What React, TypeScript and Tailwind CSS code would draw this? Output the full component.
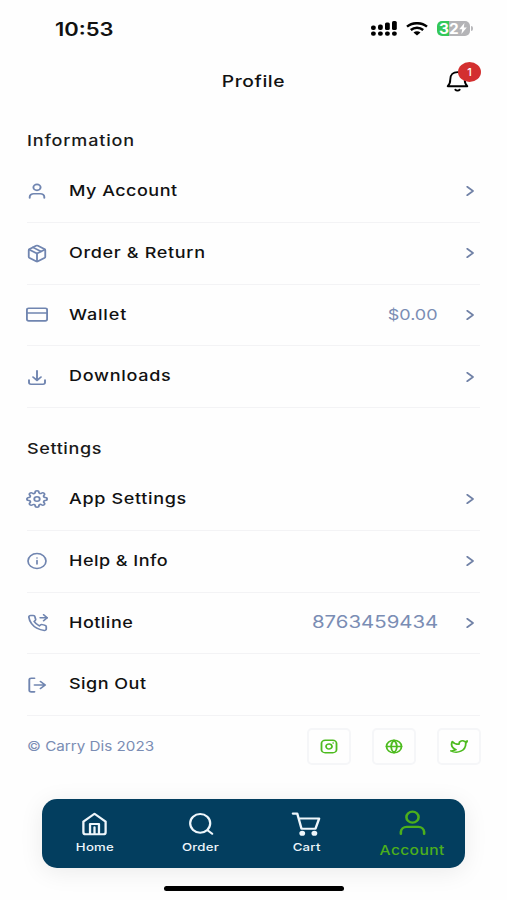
import type { ReactNode } from "react";
import { FiCreditCard, FiGlobe, FiInstagram, FiPackage, FiPhoneForwarded, FiSettings, FiTwitter } from "react-icons/fi";
import clsx from "clsx";

type RowItem = {
  label: string;
  icon: ReactNode;
  labelClass?: string;
  value?: string;
  valueClass?: string;
  arrow?: boolean;
};

const iconProps = {
  viewBox: "0 0 24 24",
  fill: "none",
  stroke: "currentColor",
  strokeLinecap: "round" as const,
  strokeLinejoin: "round" as const,
  preserveAspectRatio: "none",
};

const fiProps = { preserveAspectRatio: "none", strokeWidth: 2 };

function Icon({ children, className = "h-5 w-6", strokeWidth = 1.9 }: { children: ReactNode; className?: string; strokeWidth?: number }) {
  return (
    <svg {...iconProps} strokeWidth={strokeWidth} className={className}>
      {children}
    </svg>
  );
}

const information: RowItem[] = [
  {
    label: "My Account",
    labelClass: "tracking-[0.4px]",
    arrow: true,
    icon: (
      <Icon>
        <circle cx="12" cy="7.6" r="3.6" />
        <path d="M4.7 20.4v-1.2a4 4 0 0 1 4-4h6.6a4 4 0 0 1 4 4v1.2" />
      </Icon>
    ),
  },
  { label: "Order & Return", labelClass: "tracking-[0.55px]", arrow: true, icon: <FiPackage {...fiProps} className="h-[19px] w-[22px]" /> },
  {
    label: "Wallet",
    labelClass: "tracking-[0.7px]",
    value: "$0.00",
    valueClass: "text-[15px]",
    arrow: true,
    icon: <FiCreditCard {...fiProps} className="h-[19px] w-[22px]" />,
  },
  {
    label: "Downloads",
    labelClass: "tracking-[0.6px]",
    arrow: true,
    icon: (
      <Icon>
        <path d="M4 15.500v3.200a2 2 0 0 0 2 2h12a2 2 0 0 0 2-2v-3.200" />
        <path d="M12 4.500v11.500M8 12l4 4 4-4" />
      </Icon>
    ),
  },
];

const settings: RowItem[] = [
  { label: "App Settings", labelClass: "tracking-[0.55px]", arrow: true, icon: <FiSettings {...fiProps} className="h-[18px] w-[22px]" /> },
  {
    label: "Help & Info",
    labelClass: "tracking-[0.4px]",
    arrow: true,
    icon: (
      <Icon strokeWidth={1.7}>
        <circle cx="12" cy="12" r="9" />
        <path d="M12 11.3v4.2M12 8.3v.2" />
      </Icon>
    ),
  },
  {
    label: "Hotline",
    labelClass: "tracking-[0.4px]",
    value: "8763459434",
    valueClass: "text-[17px]",
    arrow: true,
    icon: <FiPhoneForwarded {...fiProps} className="h-[18px] w-[21px]" />,
  },
  {
    label: "Sign Out",
    labelClass: "tracking-[0.4px]",
    icon: (
      <Icon>
        <path d="M9.500 3.800H6.300a2 2 0 0 0-2 2v12.400a2 2 0 0 0 2 2h3.200" />
        <path d="M9.500 12h10.500M15.500 7.800l4.700 4.200-4.700 4.200" />
      </Icon>
    ),
  },
];

const socials = [FiInstagram, FiGlobe, FiTwitter];

function Row({ item }: { item: RowItem }) {
  return (
    <li className="flex h-[61.75px] items-center border-b border-[#f3f3f5]">
      <span className="-ml-0.5 flex w-6 justify-center text-[#7085b0]">{item.icon}</span>
      <span className={clsx("ml-5 origin-left scale-x-[1.2] text-[15px] font-medium text-[#111]", item.labelClass)}>
        {item.label}
      </span>
      {item.value && (
        <span className={clsx("mr-[28px] ml-auto origin-right scale-x-[1.2] text-[#7a8db4]", item.valueClass)}>{item.value}</span>
      )}
      {item.arrow && (
        <svg
          viewBox="0 0 8 10"
          className={clsx("mr-[6px] h-[10px] w-[8px] text-[#7081a6]", !item.value && "ml-auto")}
          fill="none"
          stroke="currentColor"
          strokeWidth="1.7"
        >
          <path d="M1.200 .8 7 5 1.200 9.200" strokeLinecap="round" strokeLinejoin="round" />
        </svg>
      )}
    </li>
  );
}

function StatusBar() {
  return (
    <div className="flex h-[57px] items-center pr-[34px] pl-[55px]">
      <span className="origin-left scale-x-[1.22] pt-px text-[18px] font-semibold text-[#111]">10:53</span>
      <svg viewBox="0 0 26 16" className="mr-[9px] ml-auto h-4 w-[26px]" fill="black">
        <rect x="0" y="4.500" width="4.800" height="4.600" rx="2" />
        <rect x="7" y="3.500" width="4.800" height="5.600" rx="2" />
        <rect x="14" y="1.500" width="4.800" height="7.600" rx="1.600" />
        <rect x="21" y="0" width="4.800" height="9.100" rx="1.600" />
        <rect x="0" y="10.500" width="4.800" height="4.200" rx="2" />
        <rect x="7" y="10.500" width="4.800" height="4.200" rx="2" />
        <rect x="14" y="10.500" width="4.800" height="4.200" rx="2" />
        <rect x="21" y="10.500" width="4.800" height="4.200" rx="2" />
      </svg>
      <svg viewBox="0 0 22 14" className="mr-[9px] h-[14px] w-[22px]" fill="none" stroke="black" strokeWidth="2.500">
        <path d="M1 4.600C6.600.1 15.400.1 21 4.600" />
        <path d="M4.800 8C8.400 5 13.600 5 17.200 8" />
        <path d="M7.500 10.500c2-1.700 5-1.700 7 0L11 13.600z" fill="black" stroke="none" />
      </svg>
      <div className="flex items-center">
        <div className="flex h-[15px] w-[33px] items-center justify-center rounded-[5px] bg-linear-to-r from-[#34c759] from-[36%] to-[#b4b4b7] to-[36%] text-white">
          <span className="mr-px scale-x-[1.1] text-[14px] leading-none font-bold">32</span>
          <svg viewBox="0 0 8 11" className="ml-[1px] h-[11px] w-2" fill="currentColor">
            <path d="M5.400 0 .2 6.200h3L2.400 11 7.800 4.600h-3z" />
          </svg>
        </div>
        <div className="ml-[1px] h-[5px] w-[2px] rounded-r-full bg-[#b9b9bc]" />
      </div>
    </div>
  );
}

function Header() {
  return (
    <header className="relative flex h-12 items-center justify-center">
      <h1 className="scale-x-[1.2] text-[16px] font-medium tracking-[0.500px] text-[#111]">Profile</h1>
      <button type="button" aria-label="Notifications" className="absolute top-[13px] left-[446px]">
        <svg viewBox="0 0 23 22" className="h-[22px] w-[23px]" fill="none" stroke="black" strokeWidth="1.900" strokeLinecap="round" strokeLinejoin="round">
          <path d="M1.700 16.200h19.600c-1.400-1.300-2.600-3-2.600-6.900 0-4.500-3-7.200-7.200-7.200S4.300 4.800 4.300 9.300c0 3.900-1.200 5.600-2.600 6.900z" />
          <path d="M9.300 19.700c1 1.200 3.400 1.200 4.400 0" />
        </svg>
        <span className="absolute top-[-8px] left-[12px] flex h-5 w-[23px] items-center justify-center rounded-[50%] bg-[#d32f2f] text-[11px] font-medium text-white">
          1
        </span>
      </button>
    </header>
  );
}

function NavItem({ label, children, active = false }: { label: string; children: ReactNode; active?: boolean }) {
  return (
    <a
      className={clsx("flex w-[105.75px] flex-col items-center", active ? "pt-[10px] text-[#4caf1c]" : "pt-3 text-[#eef6fb]")}
    >
      {children}
      <span
        className={clsx("scale-x-[1.2] font-medium", active ? "mt-[5px] text-[13px] leading-4 tracking-[0.3px]" : "mt-[3px] text-[11px] leading-[14px] tracking-[0.2px]")}
      >
        {label}
      </span>
    </a>
  );
}

function BottomNav() {
  return (
    <nav className="mx-[42px] flex h-[69px] w-[423px] rounded-[15px] bg-[#033e5f] shadow-[0_4px_24px_rgba(0,0,0,0.08)]">
      <NavItem label="Home">
        <Icon className="h-[26px] w-[29px]">
          <path d="M2.800 9.800 12 2.500l9.200 7.300v9.700a2 2 0 0 1-2 2H4.800a2 2 0 0 1-2-2z" />
          <path d="M8.300 21.300v-9.300h7.400v9.300M12 15v6" />
        </Icon>
      </NavItem>
      <NavItem label="Order">
        <Icon className="h-[26px] w-7">
          <circle cx="11.300" cy="11.400" r="8.600" />
          <path d="m17.600 17.800 4 3.200" />
        </Icon>
      </NavItem>
      <NavItem label="Cart">
        <Icon className="h-[26px] w-[30px]">
          <path d="M1.500 2.400h3.500l3.400 13.900h11.200L22.500 7H6.100" />
          <circle cx="9" cy="20.600" r="1.400" fill="currentColor" />
          <circle cx="18.700" cy="20.600" r="1.400" fill="currentColor" />
        </Icon>
      </NavItem>
      <NavItem label="Account" active>
        <Icon className="h-[28px] w-[31px]" strokeWidth={2}>
          <circle cx="12" cy="7" r="4.700" />
          <path d="M3 21.200v-1.700a4.500 4.500 0 0 1 4.500-4.200h9a4.500 4.500 0 0 1 4.500 4.200v1.700" />
        </Icon>
      </NavItem>
    </nav>
  );
}

export default function App() {
  return (
    <div className="flex h-[900px] w-[507px] flex-col overflow-hidden bg-[#fefefe] font-[Inter,sans-serif]">
      <StatusBar />
      <Header />
      <main className="h-[694px] px-[27px] pt-px">
        <h2 className="flex h-[55px] items-center pt-4 text-[15px] font-medium text-[#1a1a1a]">
          <span className="origin-left scale-x-[1.2] tracking-[0.7px]">Information</span>
        </h2>
        <ul>
          {information.map((item) => (
            <Row key={item.label} item={item} />
          ))}
        </ul>
        <h2 className="flex h-[61px] items-center pt-[22px] text-[15px] font-medium text-[#1a1a1a]">
          <span className="origin-left scale-x-[1.2] tracking-[0.5px]">Settings</span>
        </h2>
        <ul>
          {settings.map((item) => (
            <Row key={item.label} item={item} />
          ))}
        </ul>
        <footer className="mt-3 -mr-px flex items-center">
          <span className="mr-auto origin-left scale-x-[1.17] text-[13px] text-[#7a8db4]">© Carry Dis 2023</span>
          <div className="flex gap-[21px]">
            {socials.map((SocialIcon, i) => (
              <span
                key={i}
                className="flex h-[37px] w-11 items-center justify-center rounded-[5px] border-2 border-[#f5f6f8] pr-px text-[#4dbb1f]"
              >
                <SocialIcon preserveAspectRatio="none" strokeWidth={2.4} className="h-[15px] w-[18px]" />
              </span>
            ))}
          </div>
        </footer>
      </main>
      <BottomNav />
      <div className="mt-[18px] ml-[164px] h-[5px] w-[180px] rounded-full bg-black" />
    </div>
  );
}
